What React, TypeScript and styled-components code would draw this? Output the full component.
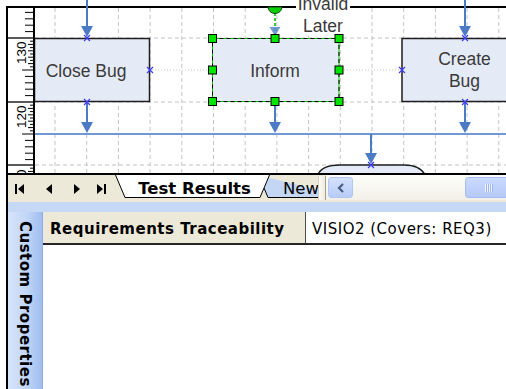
import React from "react";
import styled, { createGlobalStyle } from "styled-components";

const GlobalStyle = createGlobalStyle`
  html, body {
    margin: 0;
    padding: 0;
    background: #fff;
  }
  body {
    font-family: "DejaVu Sans", Verdana, sans-serif;
  }
`;

const Screen = styled.div`
  width: 506px;
  height: 389px;
  overflow: hidden;
  box-sizing: border-box;
  padding-left: 6px;
  display: flex;
  flex-direction: column;
  background: #fff;
`;

const DrawingRow = styled.div`
  display: flex;
  height: 175px;
  flex: none;
`;

const Ruler = styled.div`
  flex: none;
  width: 29px;
  height: 169px;
  margin-top: 6px;
  box-sizing: border-box;
  border: 2px solid #000;
  background: #fff;
  svg {
    display: block;
  }
`;

const Canvas = styled.div`
  flex: 1;
  height: 175px;
  overflow: hidden;
  svg {
    display: block;
  }
`;

const TabBar = styled.div`
  flex: none;
  height: 27px;
  display: flex;
  align-items: flex-start;
  border-left: 2px solid #000;
  background: #ece9d8;
`;

const NavGroup = styled.div`
  flex: none;
  width: 107px;
  height: 25px;
  box-sizing: border-box;
  padding: 2px 0 0 7px;
  display: flex;
  align-items: center;
`;

const NavIcon = styled.svg<{ $gap: number }>`
  display: block;
  margin-left: ${(p) => p.$gap}px;
`;

const TabStrip = styled.div`
  flex: none;
  width: 203px;
  height: 25px;
  display: flex;
  overflow: hidden;
`;

const Tab = styled.div<{ $active?: boolean; $width: number }>`
  position: relative;
  z-index: ${(p) => (p.$active ? 2 : 1)};
  flex: none;
  width: ${(p) => p.$width}px;
  height: 23px;
  margin-left: ${(p) => (p.$active ? 0 : -12)}px;
  box-sizing: border-box;
  padding: 3px 0 0 ${(p) => (p.$active ? 4 : 25)}px;
  display: flex;
  align-items: center;
  justify-content: ${(p) => (p.$active ? "center" : "flex-start")};
  font-size: 16.5px;
  font-weight: ${(p) => (p.$active ? 700 : 400)};
  color: #000;
  white-space: nowrap;
  svg {
    position: absolute;
    left: 0;
    top: 0;
    z-index: -1;
  }
`;

const Splitter = styled.div`
  flex: none;
  width: 8px;
  height: 24px;
  margin-top: 1px;
  box-sizing: border-box;
  border-left: 1px solid #d6d2c2;
  border-right: 1px solid #a19e90;
  background: linear-gradient(to right, #fbfaf5, #efece0);
`;

const HScroll = styled.div`
  flex: 1;
  height: 25px;
  display: flex;
  align-items: center;
  padding-left: 2px;
  background: linear-gradient(#fdfdfa, #f2f0e7);
  overflow: hidden;
`;

const ScrollButton = styled.div`
  flex: none;
  width: 25px;
  height: 21px;
  box-sizing: border-box;
  border: 1px solid #b4c6f0;
  border-radius: 3px;
  background: linear-gradient(#d4e1fd, #b8ccf8);
  display: flex;
  align-items: center;
  justify-content: center;
`;

const Track = styled.div`
  flex: 1;
`;

const Thumb = styled.div`
  flex: none;
  width: 46px;
  height: 21px;
  margin-right: -5px;
  box-sizing: border-box;
  border: 1px solid #a9bef0;
  border-radius: 3px;
  background: linear-gradient(#cbdafd, #b5c9f7);
  display: flex;
  align-items: center;
  justify-content: center;
  gap: 1px;
`;

const Grip = styled.span`
  width: 1px;
  height: 8px;
  background: #eef3ff;
  box-shadow: 1px 0 0 #9fb6ea;
`;

const PanelStrip = styled.div`
  flex: none;
  height: 10px;
  border-left: 2px solid #000;
  background: #c5d8f6;
`;

const Panel = styled.div`
  flex: 1;
  display: flex;
  border-left: 2px solid #000;
`;

const SideTab = styled.div`
  flex: none;
  width: 35px;
  box-sizing: border-box;
  padding-top: 9px;
  display: flex;
  justify-content: center;
  border-right: 1px solid #8eaee6;
  background: linear-gradient(to right, #d6e4fb 0%, #c2d6f7 55%, #9fbdee 100%);
`;

const SideLabel = styled.span`
  writing-mode: vertical-rl;
  font-size: 15px;
  font-weight: 700;
  letter-spacing: 0.5px;
  color: #000;
  white-space: nowrap;
`;

const PropGrid = styled.div`
  flex: 1;
  background: #fff;
`;

const PropRow = styled.div`
  display: flex;
  height: 33px;
  box-sizing: border-box;
  border-bottom: 2px solid #262626;
`;

const PropCell = styled.div<{ $header?: boolean }>`
  flex: ${(p) => (p.$header ? "none" : 1)};
  width: ${(p) => (p.$header ? "263px" : "auto")};
  box-sizing: border-box;
  padding: 3px 0 0 ${(p) => (p.$header ? 7 : 6)}px;
  display: flex;
  align-items: center;
  font-size: 15px;
  letter-spacing: 0.5px;
  font-weight: ${(p) => (p.$header ? 700 : 400)};
  color: #000;
  white-space: nowrap;
  background: ${(p) => (p.$header ? "#ece9d8" : "#fff")};
  border-right: ${(p) => (p.$header ? "1.5px solid #4f4f4f" : "none")};
`;

const BLUE = "#4b7bc4";
const FILL = "#e5ebf6";
const TEXT = "#3a3a3a";

const gridX = Array.from({ length: 15 }, (_, i) => 55 + i * 31.7);

function XMark({ x, y }: { x: number; y: number }) {
  return (
    <path
      d={`M${x - 3} ${y - 3}L${x + 3} ${y + 3}M${x + 3} ${y - 3}L${x - 3} ${y + 3}`}
      stroke="#3b3bff"
      strokeWidth={1.2}
    />
  );
}

function Arrow({ x, y1, y2 }: { x: number; y1: number; y2: number }) {
  return (
    <g>
      <line x1={x} y1={y1} x2={x} y2={y2 - 4} stroke={BLUE} strokeWidth={2} />
      <polygon points={`${x - 6},${y2 - 11} ${x + 6},${y2 - 11} ${x},${y2}`} fill={BLUE} />
    </g>
  );
}

function Handle({ x, y }: { x: number; y: number }) {
  return <rect x={x - 4} y={y - 4} width={8} height={8} fill="#00e400" stroke="#000" strokeWidth={1} />;
}

function RulerMarks() {
  const majors = [-26, 38, 102, 165];
  const ticks: React.ReactNode[] = [];
  majors.forEach((m, mi) => {
    for (let k = 1; k <= 9; k++) {
      const y = m + 3.2 * k;
      ticks.push(<line key={`u${mi}-${k}`} x1={k % 2 ? 30 : 28} x2={33} y1={y} y2={y} stroke="#000" strokeWidth={1} />);
    }
    ticks.push(<line key={`m${mi}`} x1={22} x2={33} y1={m + 32} y2={m + 32} stroke="#000" strokeWidth={1} />);
    for (let k = 1; k <= 4; k++) {
      const y = m + 32 + 6.4 * k;
      ticks.push(<line key={`l${mi}-${k}`} x1={25} x2={33} y1={y} y2={y} stroke="#000" strokeWidth={1} />);
    }
  });
  const labels = [
    { t: "130", y: 64 },
    { t: "120", y: 128 },
    { t: "110", y: 191 },
  ];
  return (
    <svg width={25} height={165} viewBox="8 8 25 165">
      {ticks}
      {[38, 102, 165].map((y) => (
        <line key={y} x1={8} x2={33} y1={y} y2={y} stroke="#000" strokeWidth={1.3} />
      ))}
      {labels.map((l) => (
        <text
          key={l.t}
          x={26}
          y={l.y}
          transform={`rotate(-90 26 ${l.y})`}
          fontFamily="'Liberation Sans', Arial, sans-serif"
          fontSize={13.5}
          fill="#000"
        >
          {l.t}
        </text>
      ))}
    </svg>
  );
}

function Diagram() {
  const font = "'Liberation Sans', Arial, sans-serif";
  return (
    <svg width={471} height={175} viewBox="35 0 471 175">
      <rect x={35} y={0} width={471} height={175} fill="#fff" />
      {gridX.map((x) => (
        <line key={x} x1={x} x2={x} y1={8} y2={173} stroke="#c4c4c4" strokeDasharray="4 3" />
      ))}
      {[38, 102, 165].map((y) => (
        <line key={y} x1={35} x2={506} y1={y} y2={y} stroke="#c4c4c4" strokeDasharray="4 3" />
      ))}
      <line x1={35} x2={506} y1={70} y2={70} stroke="#c8c8c8" strokeDasharray="1 2" />

      <rect x={296} y={0} width={54} height={36} fill="#fff" />
      <line x1={35} x2={296} y1={7} y2={7} stroke="#000" strokeWidth={2} />
      <line x1={350} x2={506} y1={7} y2={7} stroke="#000" strokeWidth={2} />
      <text x={323} y={10} textAnchor="middle" fontFamily={font} fontSize={17.5} fill={TEXT}>
        Invalid
      </text>
      <text x={323} y={32} textAnchor="middle" fontFamily={font} fontSize={17.5} fill={TEXT}>
        Later
      </text>

      <line x1={35} x2={506} y1={134} y2={134} stroke="#7198d6" strokeWidth={2} />

      <rect x={34.5} y={38.5} width={115} height={63} fill={FILL} stroke="#1e1e1e" strokeWidth={1.5} />
      <text x={86} y={77} textAnchor="middle" fontFamily={font} fontSize={17.5} fill={TEXT}>
        Close Bug
      </text>

      <rect x={402} y={38.5} width={120} height={63} fill={FILL} stroke="#1e1e1e" strokeWidth={1.5} />
      <text x={464.5} y={65} textAnchor="middle" fontFamily={font} fontSize={17.5} fill={TEXT}>
        Create
      </text>
      <text x={464.5} y={87} textAnchor="middle" fontFamily={font} fontSize={17.5} fill={TEXT}>
        Bug
      </text>

      <rect x={212.5} y={38.5} width={126.5} height={63} fill={FILL} stroke="#00c400" strokeWidth={1} />
      <rect x={212.5} y={38.5} width={126.5} height={63} fill="none" stroke="#000" strokeWidth={1} strokeDasharray="4 3" />
      <text x={275} y={77} textAnchor="middle" fontFamily={font} fontSize={17.5} fill={TEXT}>
        Inform
      </text>

      <path d="M317 177 C319 169 327 165 340 165 L404 165 C416 165 423 169 426 177 Z" fill={FILL} stroke="#1e1e1e" strokeWidth={1.5} />

      <Arrow x={87} y1={0} y2={37} />
      <Arrow x={87} y1={102} y2={133} />
      <Arrow x={465} y1={0} y2={37} />
      <Arrow x={465} y1={102} y2={133} />
      <Arrow x={275} y1={102} y2={133} />
      <Arrow x={371} y1={134} y2={164} />

      <line x1={275} x2={275} y1={13} y2={38} stroke="#00b400" strokeWidth={1.5} strokeDasharray="3 2" />
      <polygon points="269.5,27 280.5,27 275,36" fill="#5d88cc" opacity={0.85} />
      <path d="M268 7 A7 6.5 0 0 0 282 7 Z" fill="#00d000" stroke="#1c3a1c" strokeWidth={1} />

      <XMark x={87} y={38} />
      <XMark x={150} y={70} />
      <XMark x={87} y={102} />
      <XMark x={402} y={70} />
      <XMark x={465} y={38} />
      <XMark x={465} y={102} />
      <XMark x={371} y={165} />

      {[
        [212.5, 38.5],
        [275, 38.5],
        [339, 38.5],
        [212.5, 70],
        [339, 70],
        [212.5, 101.5],
        [275, 101.5],
        [339, 101.5],
      ].map(([x, y]) => (
        <Handle key={`${x}-${y}`} x={x} y={y} />
      ))}

      <line x1={35} x2={506} y1={174} y2={174} stroke="#000" strokeWidth={2} />
    </svg>
  );
}

function NavButtons() {
  return (
    <NavGroup>
      <NavIcon $gap={0} width={9} height={10} viewBox="0 0 9 10">
        <rect x={0} y={0} width={2} height={10} fill="#000" />
        <polygon points="9,0 9,10 3,5" fill="#000" />
      </NavIcon>
      <NavIcon $gap={21} width={7} height={10} viewBox="0 0 7 10">
        <polygon points="7,0 7,10 1,5" fill="#000" />
      </NavIcon>
      <NavIcon $gap={21} width={7} height={10} viewBox="0 0 7 10">
        <polygon points="1,0 1,10 7,5" fill="#000" />
      </NavIcon>
      <NavIcon $gap={17} width={10} height={10} viewBox="0 0 10 10">
        <polygon points="0,0 0,10 6,5" fill="#000" />
        <rect x={7} y={0} width={2} height={10} fill="#000" />
      </NavIcon>
    </NavGroup>
  );
}

function SheetTab({ label, active, width }: { label: string; active?: boolean; width: number }) {
  const right = active ? `${width - 10},22.5 ${width - 0.5},0` : `${width},22.5`;
  return (
    <Tab $active={active} $width={width}>
      <svg width={width} height={23}>
        <polyline
          points={`0.5,0 10,22.5 ${right}`}
          fill={active ? "#fff" : "#c3d7f5"}
          stroke="#000"
          strokeWidth={1}
        />
      </svg>
      {label}
    </Tab>
  );
}

export default function App() {
  return (
    <>
      <GlobalStyle />
      <Screen>
        <DrawingRow>
          <Ruler>
            <RulerMarks />
          </Ruler>
          <Canvas>
            <Diagram />
          </Canvas>
        </DrawingRow>
        <TabBar>
          <NavButtons />
          <TabStrip>
            <SheetTab label="Test Results" active width={155} />
            <SheetTab label="New" width={90} />
          </TabStrip>
          <Splitter />
          <HScroll>
            <ScrollButton>
              <svg width={8} height={10} viewBox="0 0 8 10">
                <polyline points="6,1 2,5 6,9" fill="none" stroke="#4a5d86" strokeWidth={2.2} />
              </svg>
            </ScrollButton>
            <Track />
            <Thumb>
              <Grip />
              <Grip />
              <Grip />
              <Grip />
            </Thumb>
          </HScroll>
        </TabBar>
        <PanelStrip />
        <Panel>
          <SideTab>
            <SideLabel>Custom Properties</SideLabel>
          </SideTab>
          <PropGrid>
            <PropRow>
              <PropCell $header>Requirements Traceability</PropCell>
              <PropCell>VISIO2 (Covers: REQ3)</PropCell>
            </PropRow>
          </PropGrid>
        </Panel>
      </Screen>
    </>
  );
}
